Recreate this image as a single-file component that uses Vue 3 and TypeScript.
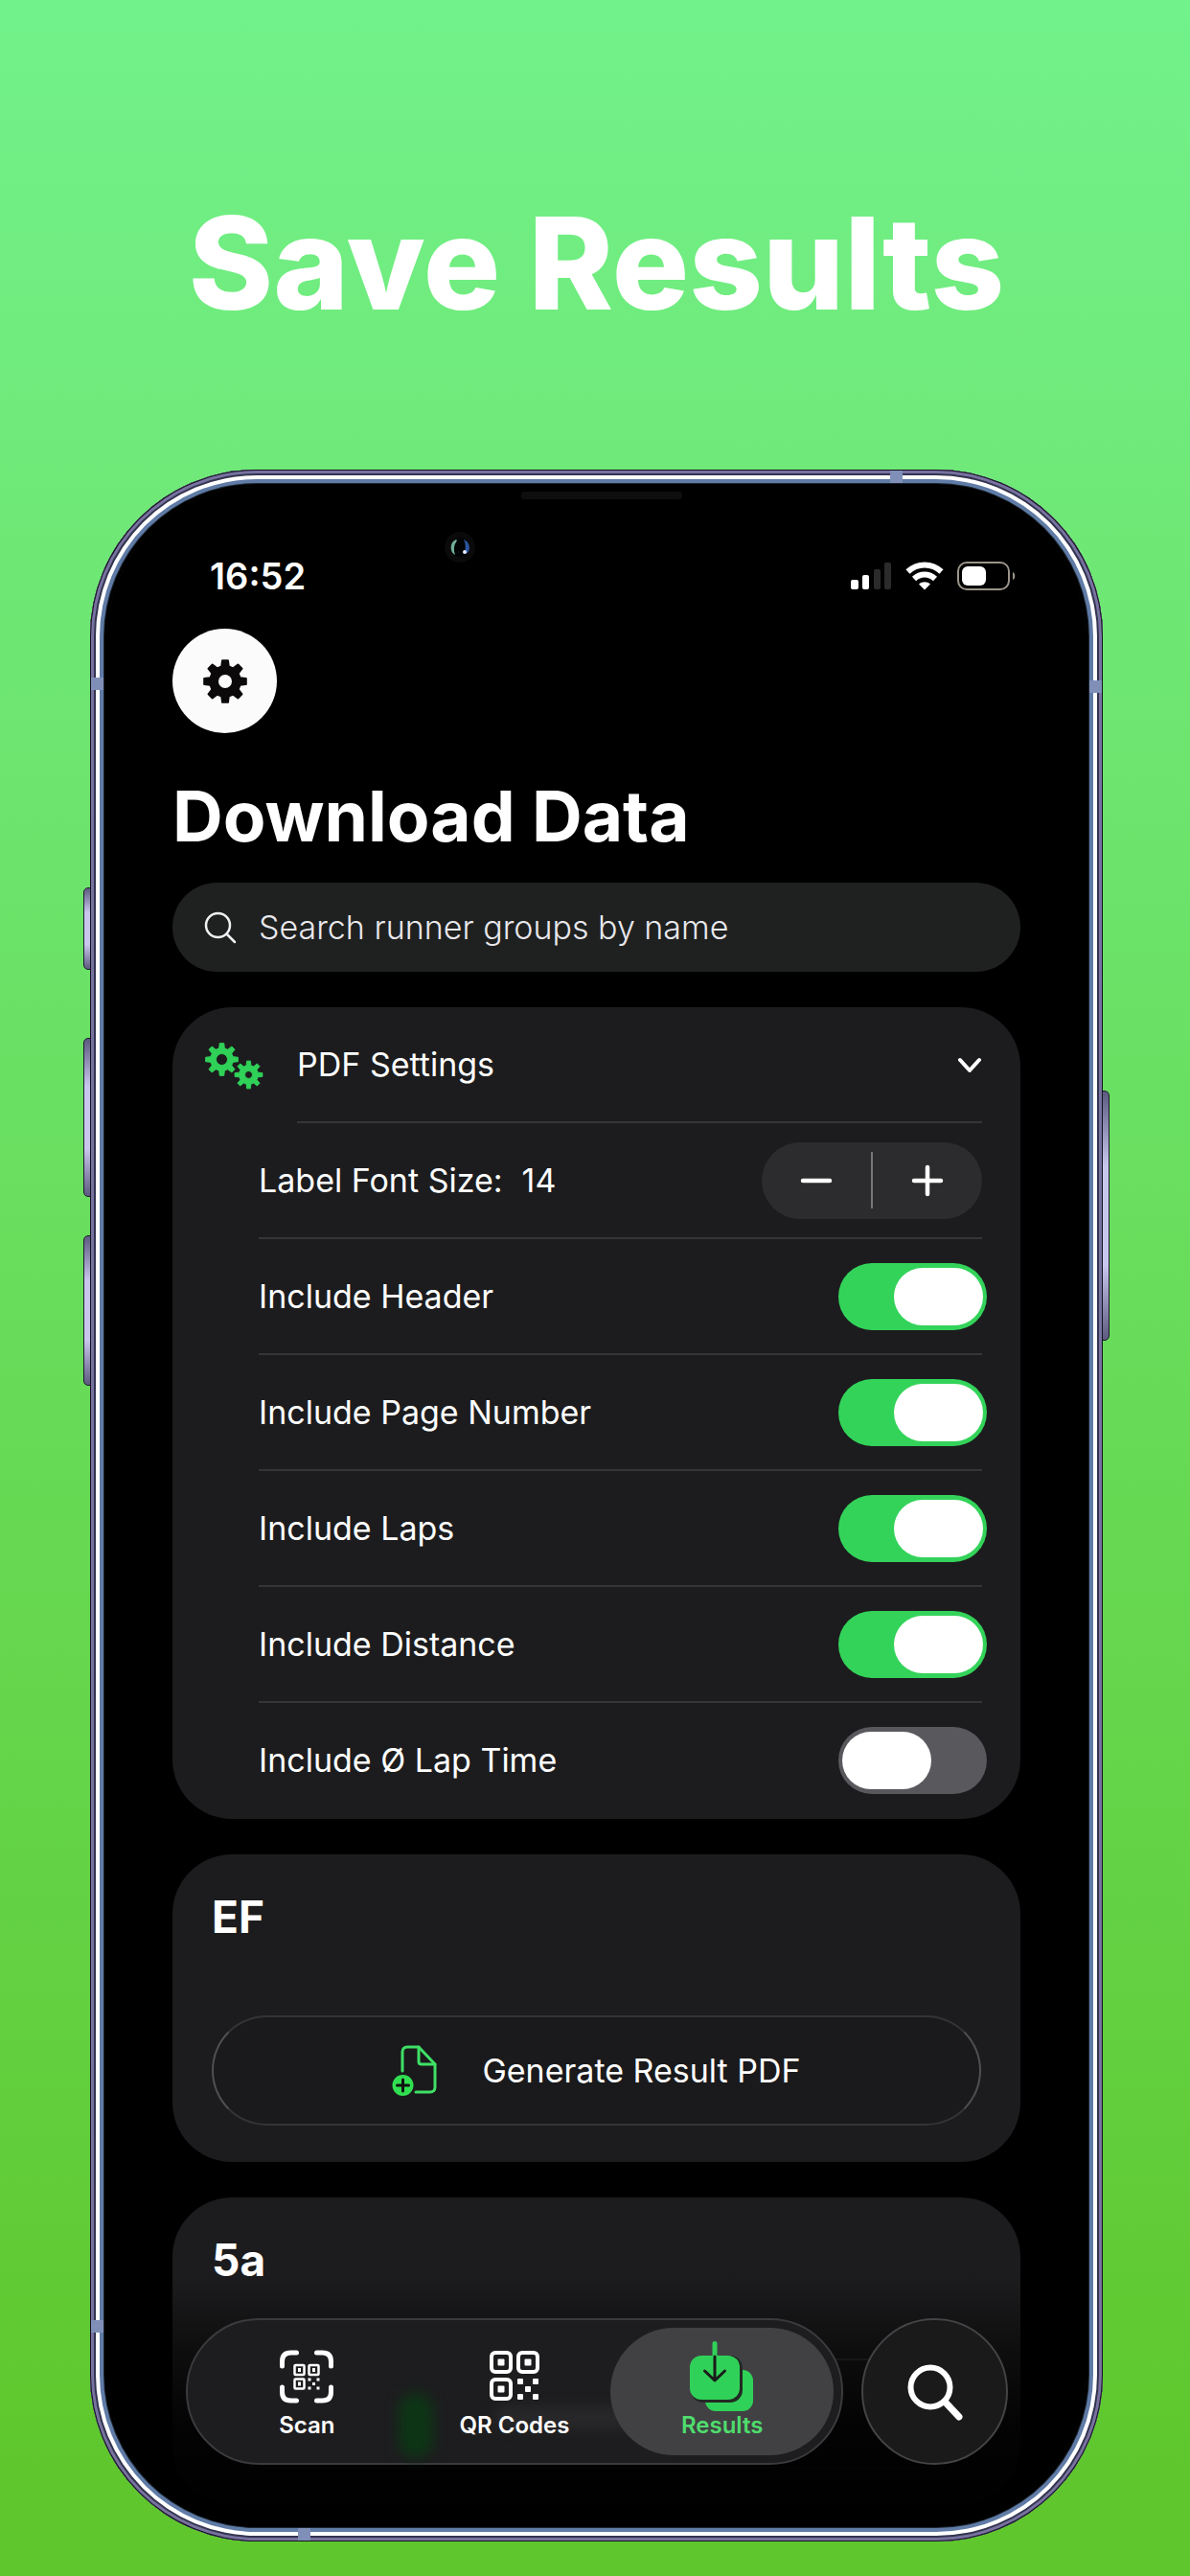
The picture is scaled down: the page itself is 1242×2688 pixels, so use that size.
<script setup lang="ts">
import { ref } from 'vue'

interface Option {
  id: string
  label: string
  on: boolean
}

const fontSize = ref(14)
const query = ref('')
const options = ref<Option[]>([
  { id: 'header', label: 'Include Header', on: true },
  { id: 'page', label: 'Include Page Number', on: true },
  { id: 'laps', label: 'Include Laps', on: true },
  { id: 'distance', label: 'Include Distance', on: true },
  { id: 'laptime', label: 'Include Ø Lap Time', on: false },
])

// Outline of an eight-toothed gear centred on (cx, cy)
function gear(cx: number, cy: number, outer: number, root: number, hole: number, teeth = 8): string {
  const pts: string[] = []
  const step = (Math.PI * 2) / teeth
  const at = (r: number, a: number) => `${(cx + r * Math.sin(a)).toFixed(2)} ${(cy - r * Math.cos(a)).toFixed(2)}`
  for (let i = 0; i < teeth; i++) {
    const a = i * step
    pts.push(at(root, a - step * 0.3), at(outer, a - step * 0.17), at(outer, a + step * 0.17), at(root, a + step * 0.3))
  }
  return `M${pts.join('L')}ZM${cx - hole} ${cy}a${hole} ${hole} 0 1 0 ${hole * 2} 0a${hole} ${hole} 0 1 0 ${-hole * 2} 0Z`
}
</script>

<template>
  <main class="page">
    <h1 class="headline">Save Results</h1>

    <div class="phone">
      <i class="side left one"></i>
      <i class="side left two"></i>
      <i class="side left three"></i>
      <i class="side right"></i>
      <div class="frame">
        <i class="band bl-top"></i>
        <i class="band br-top"></i>
        <i class="band bl-bottom"></i>
        <i class="band top"></i>
        <i class="band bottom"></i>
        <div class="screen">
          <i class="speaker"></i>
          <svg class="camera" viewBox="0 0 34 34" aria-hidden="true">
            <circle cx="17" cy="17" r="16" fill="#0a0a0b" />
            <circle cx="17" cy="17" r="10" fill="#020304" />
            <path d="M13 9a9 9 0 0 0-1 16a16 16 0 0 1 2-15z" fill="#6fae98" />
            <path d="M21 9a9 9 0 0 1 4 14l-4 1a18 18 0 0 0 0-15z" fill="#2c55a0" />
            <circle cx="22" cy="22" r="2" fill="#e8ecff" />
          </svg>

          <header class="status">
            <span class="time">16:52</span>
            <span class="indicators">
              <svg width="43" height="28" viewBox="0 0 43 28" aria-hidden="true">
                <rect x="0" y="18" width="8" height="10" rx="2" fill="#fff" />
                <rect x="12" y="13" width="7" height="15" rx="2" fill="#fff" />
                <rect x="24" y="7" width="7" height="21" rx="2" fill="#2b2b2b" />
                <rect x="35" y="0" width="7" height="28" rx="2" fill="#2b2b2b" />
              </svg>
              <svg width="40" height="30" viewBox="0 0 40 30" aria-hidden="true">
                <g fill="none" stroke="#fff" stroke-width="6">
                  <path d="M2.500 10.500C12.500 1 27.500 1 37.500 10.500" />
                  <path d="M9 18C15.500 12 24.500 12 31 18" />
                </g>
                <path d="M20 29.500L14 23.500C17.500 20.500 22.500 20.500 26 23.500Z" fill="#fff" />
              </svg>
              <svg width="61" height="30" viewBox="0 0 61 30" aria-hidden="true">
                <rect x="1" y="1" width="53" height="28" rx="9" fill="none" stroke="#9a948a" stroke-width="2" />
                <rect x="5" y="5" width="25" height="20" rx="6" fill="#fff" />
                <path d="M58 11v8c3-1 3-7 0-8z" fill="#9a948a" />
              </svg>
            </span>
          </header>

          <div class="content">
            <button class="settings" type="button" aria-label="Settings">
              <svg width="48" height="48" viewBox="0 0 48 48" aria-hidden="true">
                <path :d="gear(24, 24, 22, 16, 8)" fill="#0b0909" stroke="#0b0909" stroke-width="2" stroke-linejoin="round" fill-rule="evenodd" />
              </svg>
            </button>

            <h2 class="title">Download Data</h2>

            <label class="search">
              <svg width="34" height="34" viewBox="0 0 34 34" aria-hidden="true">
                <g fill="none" stroke="#f0f0f2" stroke-width="2.500" stroke-linecap="round">
                  <circle cx="14.500" cy="14.500" r="12.500" />
                  <path d="M24 24l8 8" />
                </g>
              </svg>
              <input v-model="query" type="text" placeholder="Search runner groups by name" aria-label="Search runner groups by name" />
            </label>

            <section class="card settings-card">
              <button class="row head" type="button">
                <svg width="61" height="52" viewBox="0 0 61 52" aria-hidden="true">
                  <path :d="gear(17.5, 19.5, 17, 12, 6)" fill="#30d158" stroke="#30d158" stroke-linejoin="round" fill-rule="evenodd" />
                  <path :d="gear(45.5, 35.5, 14.5, 10, 4)" fill="#30d158" stroke="#30d158" stroke-linejoin="round" fill-rule="evenodd" />
                </svg>
                <span class="line">
                  <span>PDF Settings</span>
                  <svg width="26" height="18" viewBox="0 0 26 18" aria-hidden="true">
                    <path d="M3 4l10 11L23 4" fill="none" stroke="#fff" stroke-width="4" stroke-linecap="round" stroke-linejoin="round" />
                  </svg>
                </span>
              </button>
              <div class="row">
                <div class="line">
                  <span class="label">Label Font Size:<output>{{ fontSize }}</output></span>
                  <div class="stepper">
                    <button type="button" aria-label="Decrease font size" @click="fontSize--">
                      <svg width="34" height="34" viewBox="0 0 34 34"><path d="M3 17h28" stroke="#fff" stroke-width="4.500" stroke-linecap="round" /></svg>
                    </button>
                    <i></i>
                    <button type="button" aria-label="Increase font size" @click="fontSize++">
                      <svg width="34" height="34" viewBox="0 0 34 34"><path d="M3 17h28M17 3v28" stroke="#fff" stroke-width="4.500" stroke-linecap="round" /></svg>
                    </button>
                  </div>
                </div>
              </div>
              <div v-for="o in options" :key="o.id" class="row">
                <div class="line">
                  <label class="label" :for="o.id">{{ o.label }}</label>
                  <input :id="o.id" v-model="o.on" class="toggle" type="checkbox" />
                </div>
              </div>
            </section>

            <section class="card group">
              <h3>EF</h3>
              <button class="generate" type="button">
                <svg width="47" height="54" viewBox="0 0 47 54" aria-hidden="true">
                  <g fill="none" stroke="#3fe066" stroke-width="3" stroke-linejoin="round" stroke-linecap="round">
                    <path d="M11 27V7c0-3 2-5 5-5h12l17 18v24c0 3-2 5-5 5H25" />
                    <path d="M28 2v15c0 2 1 3 3 3h14" />
                  </g>
                  <circle cx="11.500" cy="42" r="11" fill="#30e050" />
                  <path d="M11.500 36v12M5.500 42h12" stroke="#101411" stroke-width="3" stroke-linecap="round" />
                </svg>
                <span>Generate Result PDF</span>
              </button>
            </section>

            <section class="card group">
              <h3>5a</h3>
              <button class="generate" type="button" aria-label="Generate Result PDF"></button>
            </section>
          </div>

          <div class="fade"></div>

          <nav class="dock" aria-label="Main">
            <div class="tabs">
              <i class="glow"></i>
              <i class="smudge"></i>
              <a class="tab" href="#scan">
                <svg width="68" height="74" viewBox="0 0 68 74" aria-hidden="true">
                  <g fill="none" stroke="#fff" stroke-width="5" stroke-linecap="round">
                    <path d="M8.500 26v-5c0-6 3-9 9-9h6M44.500 12h6c6 0 9 3 9 9v5M59.500 48v5c0 6-3 9-9 9h-6M23.500 62h-6c-6 0-9-3-9-9v-5" />
                  </g>
                  <g fill="none" stroke="#fff" stroke-width="2.500">
                    <rect x="21.500" y="25" width="10" height="10" rx="1" />
                    <rect x="36.500" y="25" width="10" height="10" rx="1" />
                    <rect x="21.500" y="39.500" width="10" height="10" rx="1" />
                  </g>
                  <path d="M25 28h3v4h-3zM40 28h3v4h-3zM25 42.500h3v4h-3zM35.500 38.500h3v3h-3zM44.500 38.500h3v3h-3zM40 43h3v3h-3zM35.500 47.500h3v3h-3zM44.500 47.500h3v3h-3z" fill="#fff" />
                </svg>
                <span>Scan</span>
              </a>
              <a class="tab" href="#codes">
                <svg width="68" height="74" viewBox="0 0 68 74" aria-hidden="true">
                  <g fill="none" stroke="#fff" stroke-width="4">
                    <rect x="10" y="12" width="20" height="20" rx="4" />
                    <rect x="38" y="12" width="20" height="20" rx="4" />
                    <rect x="10" y="40" width="20" height="20" rx="4" />
                  </g>
                  <g fill="#fff">
                    <rect x="16.500" y="18.500" width="7" height="7" rx="1" />
                    <rect x="44.500" y="18.500" width="7" height="7" rx="1" />
                    <rect x="16.500" y="46.500" width="7" height="7" rx="1" />
                    <rect x="37" y="39" width="6" height="6" rx="1" />
                    <rect x="53" y="39" width="6" height="6" rx="1" />
                    <rect x="45" y="47" width="6" height="6" rx="1" />
                    <rect x="37" y="55" width="6" height="6" rx="1" />
                    <rect x="53" y="55" width="6" height="6" rx="1" />
                  </g>
                </svg>
                <span>QR Codes</span>
              </a>
              <a class="tab active" href="#results" aria-current="page">
                <svg width="68" height="74" viewBox="0 0 68 74" aria-hidden="true">
                  <rect x="16" y="30" width="50" height="43" rx="11" fill="#30d158" />
                  <path d="M1 58h52V14" fill="none" />
                  <rect x="1" y="15" width="54" height="49" rx="13" fill="#222a24" />
                  <rect x="0" y="15" width="52" height="46" rx="12" fill="#30d158" />
                  <path d="M26 2.500V15" stroke="#30d158" stroke-width="5" stroke-linecap="round" />
                  <path d="M26 16v24M15.500 31L26 41l10.500-10" fill="none" stroke="#1a1a1a" stroke-width="3" stroke-linecap="round" stroke-linejoin="round" />
                </svg>
                <span>Results</span>
              </a>
            </div>
            <button class="find" type="button" aria-label="Search">
              <svg width="60" height="60" viewBox="0 0 60 60" aria-hidden="true">
                <g fill="none" stroke="#fff" stroke-width="6" stroke-linecap="round">
                  <circle cx="25" cy="25" r="20.500" />
                  <path d="M41 41l14 15" stroke-width="7" />
                </g>
              </svg>
            </button>
          </nav>
        </div>
      </div>
    </div>
  </main>
</template>

<style>
body {
  margin: 0;
}
</style>

<style scoped>
* {
  box-sizing: border-box;
}

.page {
  font-family: Inter, "Liberation Sans", sans-serif;
  background: linear-gradient(#72f28b, #6fe877 20%, #67db57 55%, #5fc72d 96%, #5fc72d);
  padding: 194px 91px 36px 94px;
  color: #fff;
}

.headline {
  margin: 0 0 136px;
  font-size: 134px;
  line-height: 160px;
  font-weight: 800;
  text-align: center;
  white-space: nowrap;
}

button {
  font: inherit;
  color: inherit;
  border: 0;
  padding: 0;
  background: none;
}

svg {
  display: block;
  flex: none;
  overflow: visible;
}

/* Device body */
.phone {
  position: relative;
}

.frame {
  position: relative;
  border-radius: 174px;
  padding: 18px;
  background: #000;
  box-shadow:
    inset 0 0 0 1px #14121f,
    inset 0 0 0 4px #77729f,
    inset 0 0 0 6px #33344f,
    inset 0 0 0 10px #fff,
    inset 0 0 0 14px #5f7ba6,
    inset 0 0 0 15px #1c2530,
    inset 0 0 0 18px #000,
    inset 0 0 0 19px #1d1814;
}

.side {
  position: absolute;
  width: 9px;
  border: 1px solid #1b1a2b;
  background: linear-gradient(#5d5a80, #c9c6ee 30%, #c9c6ee 70%, #5d5a80);
}

.left {
  left: -7px;
  border-radius: 5px 0 0 5px;
}

.right {
  right: -7px;
  top: 648px;
  height: 261px;
  border-radius: 0 5px 5px 0;
}

.one {
  top: 436px;
  height: 86px;
}

.two {
  top: 593px;
  height: 166px;
}

.three {
  top: 799px;
  height: 157px;
}

.band {
  position: absolute;
  width: 13px;
  height: 13px;
  background: #7f8fb8;
}

.bl-top {
  left: 1px;
  top: 217px;
}

.br-top {
  right: 1px;
  top: 220px;
}

.bl-bottom {
  left: 1px;
  bottom: 218px;
}

.top {
  top: 1px;
  right: 209px;
}

.bottom {
  bottom: 1px;
  left: 217px;
}

.screen {
  position: relative;
  overflow: hidden;
  border-radius: 156px;
  background: #000;
}

.speaker {
  position: absolute;
  top: 5px;
  left: 50%;
  width: 168px;
  height: 8px;
  margin-left: -79px;
  border-radius: 3px;
  background: #0e0e0e;
}

.camera {
  position: absolute;
  top: 46px;
  left: 351px;
  width: 34px;
  height: 34px;
}

/* Status bar */
.status {
  display: flex;
  align-items: center;
  justify-content: space-between;
  padding: 69px 73px 0 107px;
  height: 117px;
}

.time {
  font-size: 38px;
  line-height: 48px;
  font-weight: 600;
}

.indicators {
  display: flex;
  align-items: center;
  gap: 14px;
}

/* Scrolling content */
.content {
  padding: 31px 68px 20px;
}

.settings {
  display: flex;
  align-items: center;
  justify-content: center;
  width: 109px;
  height: 109px;
  border-radius: 50%;
  background: #fbfbfb;
}

.title {
  margin: 42px 0 24px;
  font-size: 73px;
  line-height: 90px;
  font-weight: 700;
  white-space: nowrap;
}

.search {
  display: flex;
  align-items: center;
  gap: 23px;
  height: 93px;
  padding: 0 33px;
  border-radius: 48px;
  background: #1f2020;
}

.search input {
  flex: 1;
  min-width: 0;
  padding: 0;
  border: 0;
  outline: 0;
  background: none;
  color: #f2f2f4;
  font: 300 34px/44px Inter, "Liberation Sans", sans-serif;
}

.search input::placeholder {
  color: #e8e8ec;
  opacity: 1;
}

.card {
  margin-top: 37px;
  border-radius: 62px;
  background: #1c1c1e;
}

.row {
  display: flex;
  align-items: stretch;
  width: 100%;
  height: 121px;
  padding: 0 40px 0 90px;
  font-size: 34px;
  line-height: 44px;
  text-align: left;
}

.head {
  align-items: center;
  gap: 35px;
  padding-left: 34px;
}

.line {
  flex: 1;
  align-self: stretch;
  display: flex;
  align-items: center;
  justify-content: space-between;
  border-bottom: 2px solid #353537;
}

.row:last-child .line {
  border-bottom-color: transparent;
}

.label output {
  margin-left: 20px;
}

.stepper {
  display: flex;
  align-items: center;
  width: 230px;
  height: 80px;
  border-radius: 40px;
  background: #2c2c2e;
}

.stepper button {
  flex: 1;
  display: flex;
  justify-content: center;
}

.stepper i {
  width: 2px;
  height: 59px;
  background: #77777b;
}

.toggle {
  appearance: none;
  display: flex;
  width: 155px;
  height: 70px;
  margin: 0 -5px 0 0;
  padding: 5px 4px;
  border-radius: 35px;
  background: #58585d;
}

.toggle::before {
  content: "";
  width: 93px;
  height: 60px;
  border-radius: 30px;
  background: #fff;
}

.toggle:checked {
  justify-content: flex-end;
  background: #33d35a;
}

.group {
  padding: 37px 41px 38px;
}

.group h3 {
  margin: 0 0 75px;
  font-size: 46px;
  line-height: 56px;
  font-weight: 700;
}

.generate {
  display: flex;
  align-items: center;
  justify-content: center;
  gap: 47px;
  width: 100%;
  height: 115px;
  border: 2px solid #343436;
  border-left-color: #505052;
  border-right-color: #505052;
  border-radius: 58px;
  background: #1a1a1c;
  font-size: 34px;
  line-height: 44px;
}

/* Bottom dock lies over the list */
.fade {
  position: absolute;
  left: 0;
  right: 0;
  bottom: 0;
  height: 260px;
  background: linear-gradient(transparent, #00000080 30%, #000000e0 60%, #000);
}

.dock {
  position: absolute;
  left: 82px;
  right: 81px;
  bottom: 62px;
  display: flex;
  justify-content: space-between;
}

.tabs {
  position: relative;
  display: flex;
  width: 686px;
  height: 153px;
  padding: 8px;
  border: 2px solid #3b3b3e;
  border-radius: 77px;
  background: #1d1d1f;
}

.glow,
.smudge {
  position: absolute;
  border-radius: 22px;
}

.glow {
  left: 220px;
  top: 76px;
  width: 36px;
  height: 68px;
  background: #0d3515;
  filter: blur(7px);
}

.smudge {
  left: 320px;
  top: 90px;
  width: 180px;
  height: 24px;
  background: #28282a;
  filter: blur(6px);
}

.tab {
  position: relative;
  display: flex;
  flex: 1;
  flex-direction: column;
  align-items: center;
  margin-right: -16px;
  padding-top: 14px;
  border-radius: 67px;
  color: #fff;
  font-size: 24px;
  line-height: 28px;
  font-weight: 600;
  text-decoration: none;
}

.tab:last-child {
  margin-right: 0;
}

.active {
  background: #414144;
  color: #4fdc6c;
}

.find {
  display: flex;
  align-items: center;
  justify-content: center;
  width: 153px;
  height: 153px;
  border: 2px solid #444446;
  border-radius: 50%;
  background: #1a1a1b;
}
</style>
